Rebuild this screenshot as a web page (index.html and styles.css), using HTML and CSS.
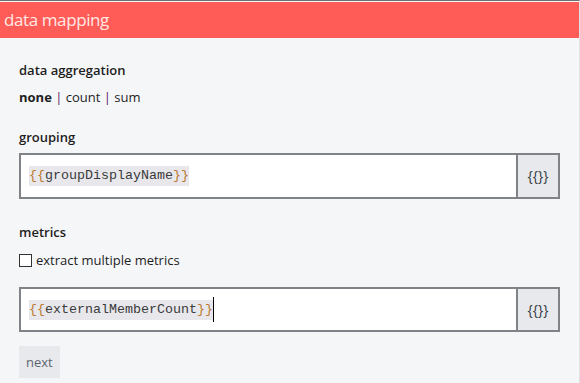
FILE: index.html
```html
<!DOCTYPE html>
<html lang="en">
<head>
    <meta charset="UTF-8">
    <meta name="viewport" content="width=device-width, initial-scale=1.0">
    <title>data mapping</title>
    <link rel="stylesheet" href="styles.css">
</head>
<body>
    <div class="page">
        <div class="header">data mapping</div>

        <div class="content">
            <div class="label label-first">data aggregation</div>
            <div class="options">
                <span class="option active">none</span>
                <span class="sep">|</span>
                <span class="option">count</span>
                <span class="sep">|</span>
                <span class="option">sum</span>
            </div>

            <div class="label label-group">grouping</div>
            <div class="field">
                <div class="field-input">
                    <span class="token"><span class="brace">{{</span>groupDisplayName<span class="brace">}}</span></span>
                </div>
                <div class="field-addon">{{}}</div>
            </div>

            <div class="label label-metrics">metrics</div>
            <label class="check-row">
                <input type="checkbox" class="check">
                extract multiple metrics
            </label>

            <div class="field field-metrics">
                <div class="field-input">
                    <span class="token"><span class="brace">{{</span>externalMemberCount<span class="brace">}}</span></span><span class="caret"></span>
                </div>
                <div class="field-addon">{{}}</div>
            </div>

            <button class="button-next">next</button>
        </div>
    </div>
</body>
</html>
```

FILE: styles.css
```css
:root {
    --header-color: #ff5b57;
    --bg-color: #f5f6f8;
    --border-color: #7f8388;
    --addon-bg: #e8e9ec;
    --text-color: #1e1e1e;
}

body {
    margin: 0;
    background: #ffffff;
    font-family: 'Open Sans', 'Noto Sans', sans-serif;
    color: var(--text-color);
}

.page {
    width: 579px;
    height: 382px;
    background: var(--bg-color);
    border-top: 1px solid #6d7176;
    border-right: 1px solid #e2e2e4;
    overflow: hidden;
}

.header {
    margin-top: 1px;
    height: 36px;
    line-height: 36px;
    padding-left: 4px;
    background: var(--header-color);
    color: #ffe9e4;
    font-size: 17px;
    letter-spacing: -0.4px;
}

.content {
    padding: 0 19px;
    font-size: 13px;
    line-height: 20px;
}

.label {
    font-weight: 600;
}

.label-first {
    margin-top: 22px;
}

.options {
    margin-top: 7px;
}

.option.active {
    font-weight: 700;
}

.sep {
    color: #5c1a5c;
}

.label-group {
    margin-top: 20px;
}

.field {
    display: flex;
    height: 42px;
    margin-top: 6px;
    border: 2px solid var(--border-color);
    background: #ffffff;
}

.field-input {
    flex: 1;
    display: flex;
    align-items: center;
    padding: 0 8px;
}

.token {
    font-family: 'Liberation Mono', monospace;
    font-size: 13.33px;
    line-height: 20px;
    background: #e8e8ec;
    color: #3a3a3a;
}

.brace {
    color: #bb7a2e;
}

.caret {
    display: inline-block;
    width: 1px;
    height: 25px;
    background: #000000;
}

.field-addon {
    width: 40px;
    display: flex;
    align-items: center;
    justify-content: center;
    border-left: 2px solid var(--border-color);
    background: var(--addon-bg);
    color: #333a44;
    font-size: 14px;
}

.label-metrics {
    margin-top: 23px;
}

.check-row {
    display: flex;
    align-items: center;
    margin-top: 8px;
}

.check {
    -webkit-appearance: none;
    appearance: none;
    width: 13px;
    height: 13px;
    margin: 0 4px 0 0;
    border: 1px solid #333333;
    background: #ffffff;
}

.field-metrics {
    margin-top: 17px;
    height: 41px;
}

.button-next {
    display: block;
    margin-top: 14px;
    height: 32px;
    padding: 0 7px;
    border: none;
    background: var(--addon-bg);
    color: #5d6670;
    font-family: inherit;
    font-size: 13px;
}
```
